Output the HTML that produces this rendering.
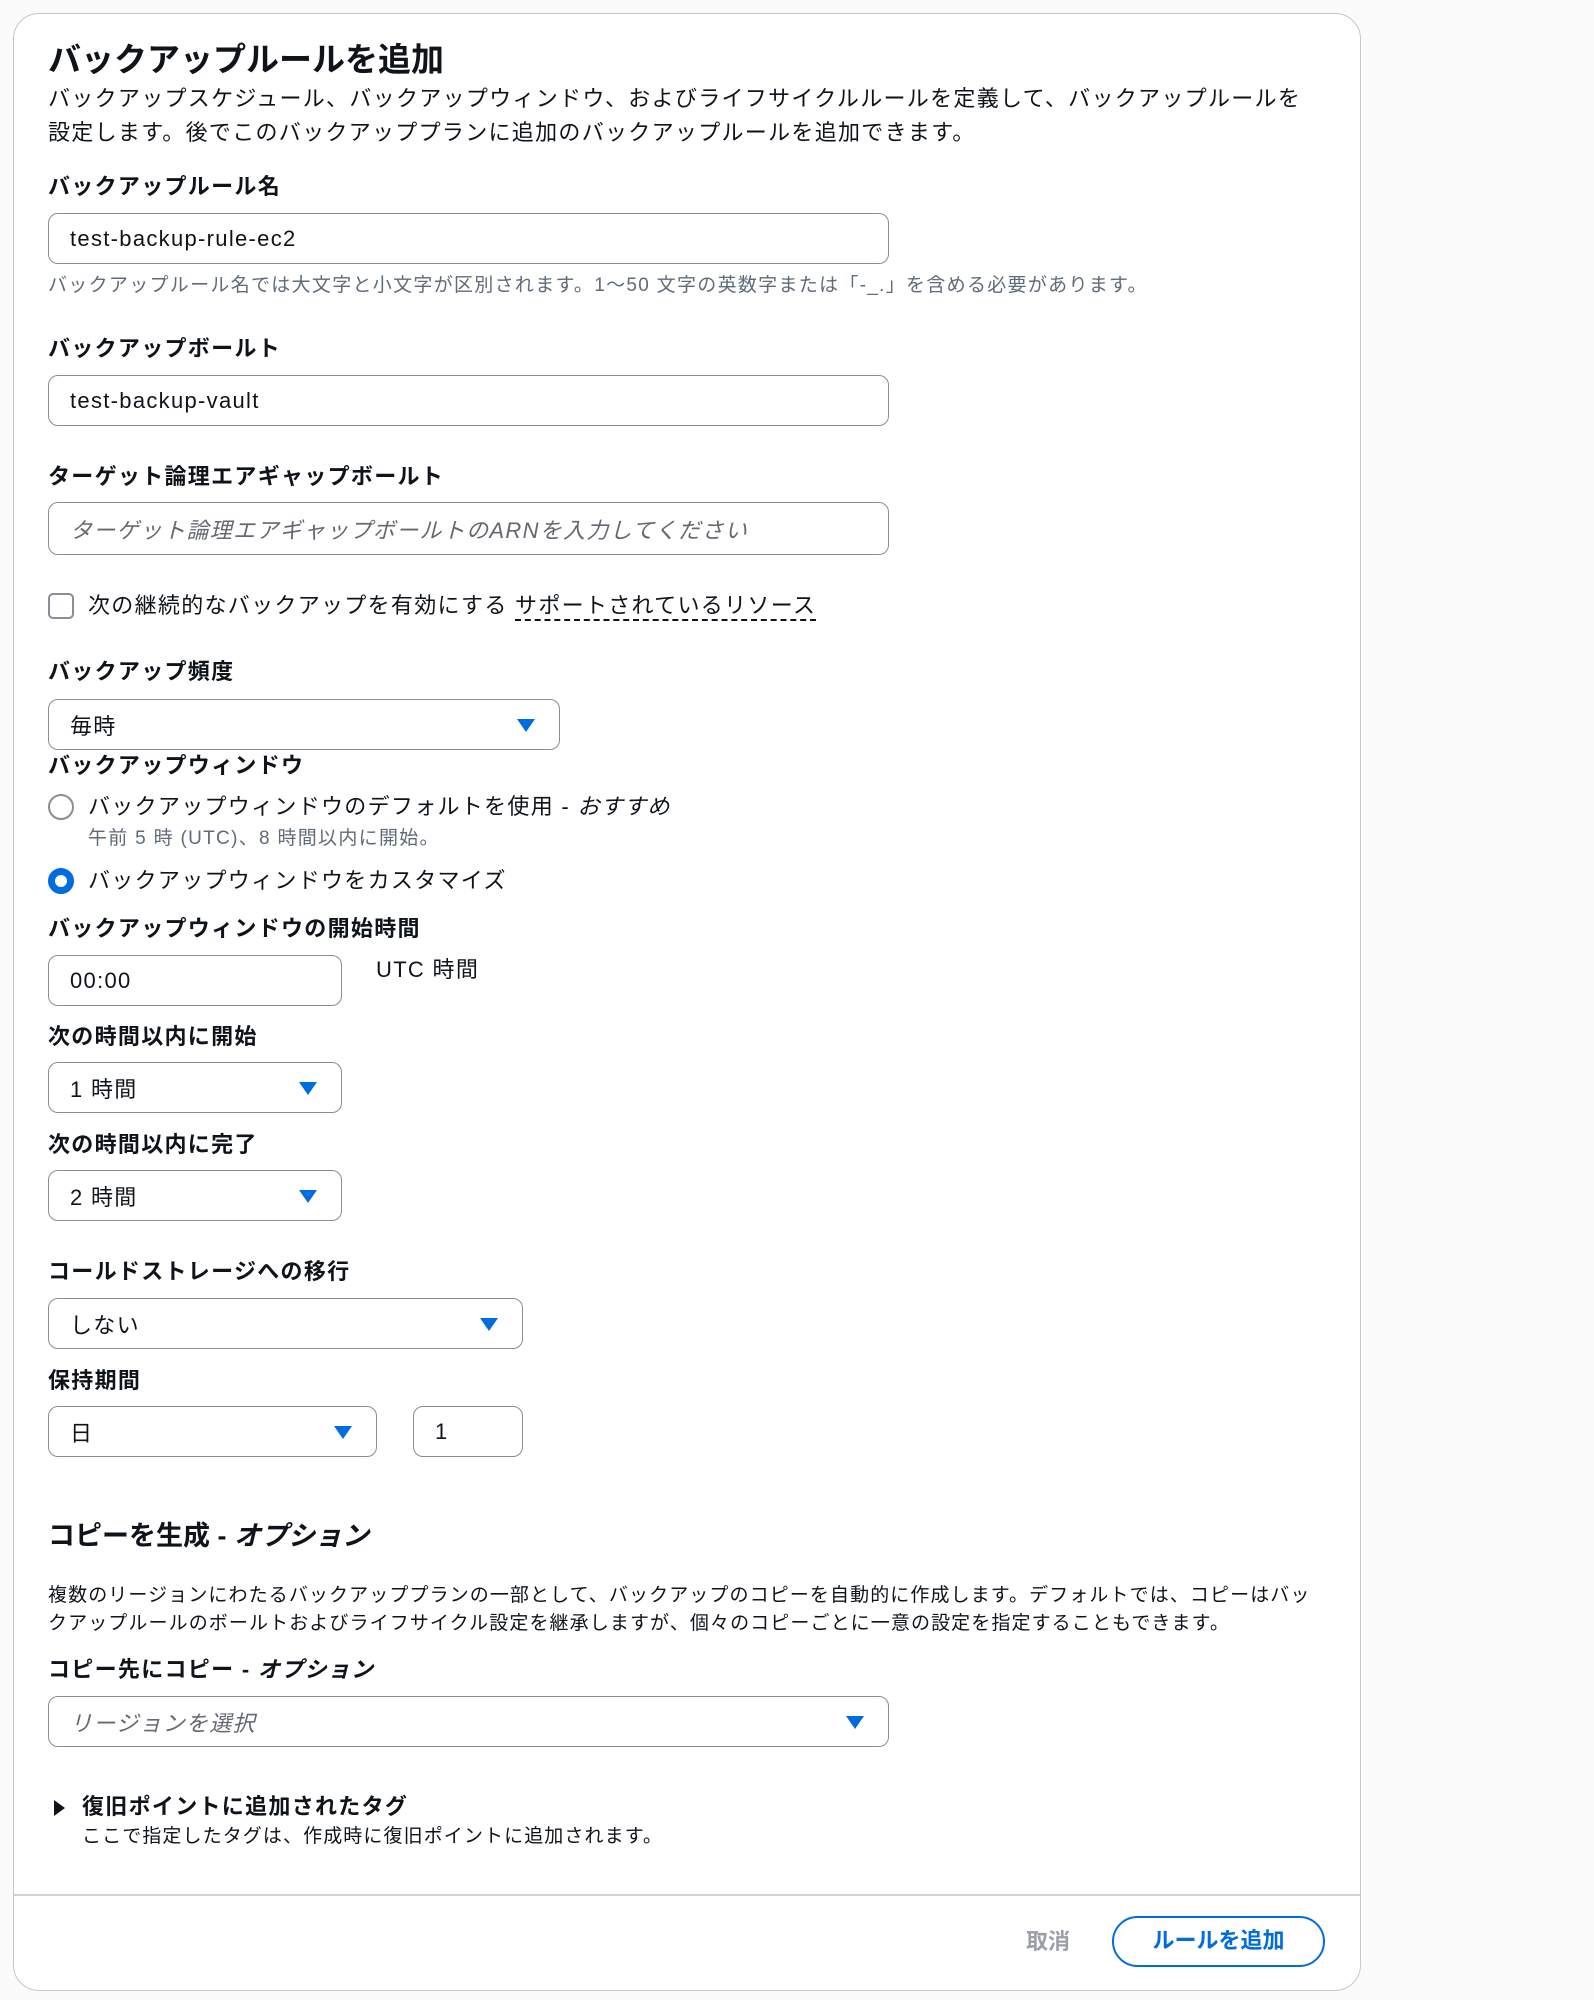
<!DOCTYPE html>
<html><head><meta charset="utf-8"><style>
*{margin:0;padding:0;box-sizing:border-box}
body{width:1594px;height:2000px;background:#fbfbfb;font-family:"Liberation Sans","Noto Sans CJK JP",sans-serif;color:#0f141a;position:relative;overflow:hidden}
.card{position:absolute;left:13px;top:13px;width:1348px;height:1978px;background:#fff;border:1.5px solid #c6c6cd;border-radius:26px}
.t{position:absolute;white-space:nowrap;line-height:30px;font-size:22px;letter-spacing:1.3px}
.b{font-weight:700}
.g{color:#5f6b7a}
.box{position:absolute;border:1.5px solid #8c8c94;border-radius:10px;background:#fff}
.box span{position:absolute;left:21px;top:50%;transform:translateY(-50%);font-size:22px;white-space:nowrap;letter-spacing:1.3px}
.arr{position:absolute;right:24px;top:50%;margin-top:-6px;width:0;height:0;border-left:9px solid transparent;border-right:9px solid transparent;border-top:13px solid #006ce0}
.ph{color:#656871;font-style:italic}
</style></head><body>
<div class="card"></div>
<div class="t b" style="left:48px;top:40px;font-size:33px;line-height:40px;letter-spacing:0">バックアップルールを追加</div>
<div class="t" style="left:48px;top:84px">バックアップスケジュール、バックアップウィンドウ、およびライフサイクルルールを定義して、バックアップルールを</div>
<div class="t" style="left:48px;top:118px">設定します。後でこのバックアッププランに追加のバックアップルールを追加できます。</div>

<div class="t b" style="left:48px;top:172px">バックアップルール名</div>
<div class="box" style="left:48px;top:213px;width:841px;height:51px"><span>test-backup-rule-ec2</span></div>
<div class="t g" style="left:48px;top:273px;font-size:19px;line-height:26px">バックアップルール名では大文字と小文字が区別されます。1〜50 文字の英数字または「-_.」を含める必要があります。</div>

<div class="t b" style="left:48px;top:334px">バックアップボールト</div>
<div class="box" style="left:48px;top:375px;width:841px;height:51px"><span>test-backup-vault</span></div>

<div class="t b" style="left:48px;top:462px">ターゲット論理エアギャップボールト</div>
<div class="box" style="left:48px;top:502px;width:841px;height:53px"><span class="ph">ターゲット論理エアギャップボールトのARNを入力してください</span></div>

<div style="position:absolute;left:48px;top:593px;width:26px;height:26px;border:2px solid #8c8c94;border-radius:5px"></div>
<div class="t" style="left:88px;top:591px">次の継続的なバックアップを有効にする <span style="border-bottom:2px dashed #0f141a;padding-bottom:1px">サポートされているリソース</span></div>

<div class="t b" style="left:48px;top:657px">バックアップ頻度</div>
<div class="box" style="left:48px;top:699px;width:512px;height:51px"><span>毎時</span><div class="arr"></div></div>
<div class="t b" style="left:48px;top:751px">バックアップウィンドウ</div>
<div style="position:absolute;left:48px;top:794px;width:26px;height:26px;border:2px solid #8c8c94;border-radius:50%"></div>
<div class="t" style="left:88px;top:792px">バックアップウィンドウのデフォルトを使用 - <i>おすすめ</i></div>
<div class="t g" style="left:88px;top:826px;font-size:19px;line-height:26px">午前 5 時 (UTC)、8 時間以内に開始。</div>
<div style="position:absolute;left:48px;top:868px;width:26px;height:26px;border:7px solid #006ce0;border-radius:50%"></div>
<div class="t" style="left:88px;top:866px">バックアップウィンドウをカスタマイズ</div>

<div class="t b" style="left:48px;top:914px">バックアップウィンドウの開始時間</div>
<div class="box" style="left:48px;top:955px;width:294px;height:51px"><span>00:00</span></div>
<div class="t" style="left:376px;top:955px">UTC 時間</div>

<div class="t b" style="left:48px;top:1022px">次の時間以内に開始</div>
<div class="box" style="left:48px;top:1062px;width:294px;height:51px"><span>1 時間</span><div class="arr"></div></div>
<div class="t b" style="left:48px;top:1130px">次の時間以内に完了</div>
<div class="box" style="left:48px;top:1170px;width:294px;height:51px"><span>2 時間</span><div class="arr"></div></div>

<div class="t b" style="left:48px;top:1257px">コールドストレージへの移行</div>
<div class="box" style="left:48px;top:1298px;width:475px;height:51px"><span>しない</span><div class="arr"></div></div>
<div class="t b" style="left:48px;top:1366px">保持期間</div>
<div class="box" style="left:48px;top:1406px;width:329px;height:51px"><span>日</span><div class="arr"></div></div>
<div class="box" style="left:413px;top:1406px;width:110px;height:51px"><span>1</span></div>

<div class="t b" style="left:48px;top:1518px;font-size:27px;line-height:36px;letter-spacing:0">コピーを生成 - <i>オプション</i></div>
<div class="t" style="left:48px;top:1582px;font-size:19px;line-height:28px;letter-spacing:1.1px">複数のリージョンにわたるバックアッププランの一部として、バックアップのコピーを自動的に作成します。デフォルトでは、コピーはバッ</div>
<div class="t" style="left:48px;top:1610px;font-size:19px;line-height:28px;letter-spacing:1.1px">クアップルールのボールトおよびライフサイクル設定を継承しますが、個々のコピーごとに一意の設定を指定することもできます。</div>
<div class="t b" style="left:48px;top:1655px">コピー先にコピー - <i>オプション</i></div>
<div class="box" style="left:48px;top:1696px;width:841px;height:51px"><span class="ph">リージョンを選択</span><div class="arr"></div></div>

<div style="position:absolute;left:54px;top:1800px;width:0;height:0;border-top:8px solid transparent;border-bottom:8px solid transparent;border-left:11px solid #0f141a"></div>
<div class="t b" style="left:82px;top:1792px">復旧ポイントに追加されたタグ</div>
<div class="t" style="left:82px;top:1824px;font-size:19px;line-height:26px;letter-spacing:1.1px">ここで指定したタグは、作成時に復旧ポイントに追加されます。</div>

<div style="position:absolute;left:14px;top:1894px;width:1346px;height:2px;background:#d1d1d6"></div>
<div class="t b" style="left:1026px;top:1927px;color:#9ba0a8;letter-spacing:0">取消</div>
<div style="position:absolute;left:1112px;top:1916px;width:213px;height:51px;border:2.5px solid #006ce0;border-radius:26px;color:#006ce0;font-weight:700;font-size:22px;text-align:center;line-height:46px">ルールを追加</div>
</body></html>
